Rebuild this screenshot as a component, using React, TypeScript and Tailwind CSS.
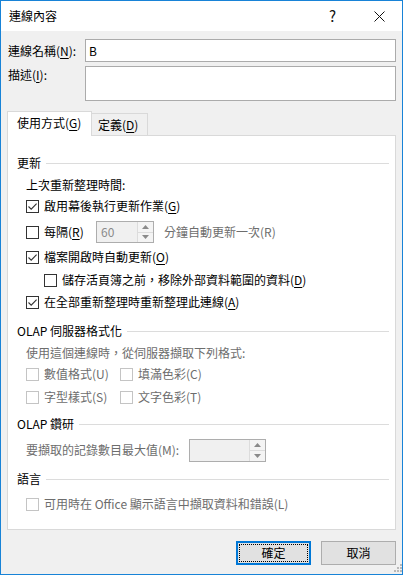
import React from "react";

function Cb({ checked = false, disabled = false }: { checked?: boolean; disabled?: boolean }) {
  return (
    <span
      className={
        disabled
          ? "w-[13px] h-[13px] border border-[#c4c4c4] bg-white flex items-center justify-center shrink-0"
          : "w-[13px] h-[13px] border border-[#333333] bg-white flex items-center justify-center shrink-0"
      }
    >
      {checked && (
        <svg width="11" height="11" viewBox="0 0 11 11">
          <path d="M1.5 5.5 L4.2 8.2 L9.6 2.6" stroke="#333333" strokeWidth="1.1" fill="none" />
        </svg>
      )}
    </span>
  );
}

function U({ c }: { c: string }) {
  return <span className="underline underline-offset-2">{c}</span>;
}

function Section({ title }: { title: string }) {
  return (
    <div className="h-[20px] flex items-center">
      <span className="whitespace-nowrap">{title}</span>
      <div className="flex-1 h-px bg-[#dcdcdc] ml-[5px]" />
    </div>
  );
}

function Arrow({ up }: { up: boolean }) {
  return (
    <svg width="7" height="4" viewBox="0 0 7 4">
      {up ? <path d="M0 4 L3.5 0 L7 4 Z" fill="#8a8a8a" /> : <path d="M0 0 L3.5 4 L7 0 Z" fill="#8a8a8a" />}
    </svg>
  );
}

function SpinButtons() {
  return (
    <div className="w-[16px] flex flex-col border-l border-[#dcdcdc] bg-[#f4f4f4]">
      <div className="flex-1 flex items-center justify-center border-b border-[#dcdcdc]">
        <Arrow up />
      </div>
      <div className="flex-1 flex items-center justify-center">
        <Arrow up={false} />
      </div>
    </div>
  );
}

export default function App() {
  return (
    <div className="w-[403px] h-[575px] border border-[#1883d7] bg-[#f0f0f0] flex flex-col font-['Noto_Sans_CJK_TC',sans-serif] text-[12px] leading-[16px] text-black overflow-hidden">
      {/* Title bar */}
      <div className="h-[30px] bg-white flex items-center pl-[8px] shrink-0">
        <span className="flex-1">連線內容</span>
        <span className="text-[15px] mr-[38px] text-[#111]">?</span>
        <svg width="11" height="11" viewBox="0 0 11 11" className="mr-[17px]">
          <path d="M0.5 0.5 L10.5 10.5 M10.5 0.5 L0.5 10.5" stroke="#111" strokeWidth="1" />
        </svg>
      </div>

      {/* Body */}
      <div className="flex-1 flex flex-col pt-[8px]">
        <div className="flex items-center pl-[7px] pr-[6px]">
          <span className="w-[77px]">
            連線名稱(<U c="N" />):
          </span>
          <div className="flex-1 h-[23px] bg-white border border-[#ababab] flex items-center pl-[3px]">B</div>
        </div>
        <div className="flex items-start pl-[7px] pr-[6px] mt-[4px]">
          <span className="w-[77px] pt-[1px]">
            描述(<U c="I" />):
          </span>
          <div className="flex-1 h-[35px] bg-white border border-[#ababab]" />
        </div>

        {/* Tabs */}
        <div className="flex items-end pl-[6px] mt-[10px] h-[24px]">
          <div className="h-[25px] -mb-px relative z-10 bg-white border border-b-0 border-[#d9d9d9] w-[85px] flex items-center pl-[9px] pb-[2px]">
            使用方式(<U c="G" />)
          </div>
          <div className="h-[22px] border border-l-0 border-b-0 border-[#d9d9d9] bg-[#f0f0f0] w-[56px] flex items-center pl-[6px]">
            定義(<U c="D" />)
          </div>
        </div>
        <div className="mx-[6px] h-[395px] bg-white border border-[#d9d9d9] pl-[9px] pr-[6px] pt-[17px] flex flex-col shrink-0">
          <Section title="更新" />
          <div className="h-[20px] mt-[2px] flex items-center pl-[9px]">上次重新整理時間:</div>
          <div className="h-[20px] mt-[1px] flex items-center pl-[9px] gap-[5px]">
            <Cb checked />
            <span>
              啟用幕後執行更新作業(<U c="G" />)
            </span>
          </div>
          <div className="h-[20px] mt-[6px] flex items-center pl-[9px]">
            <Cb />
            <span className="ml-[5px] w-[52px]">
              每隔(<U c="R" />)
            </span>
            <div className="w-[58px] h-[22px] border border-[#adadad] flex shrink-0">
              <div className="flex-1 bg-[#f0f0f0] text-[#8a8a8a] pl-[4px] flex items-center">60</div>
              <SpinButtons />
            </div>
            <span className="ml-[10px] text-[#6d6d6d]">分鐘自動更新一次(R)</span>
          </div>
          <div className="h-[20px] mt-[5px] flex items-center pl-[9px] gap-[5px]">
            <Cb checked />
            <span>
              檔案開啟時自動更新(<U c="O" />)
            </span>
          </div>
          <div className="h-[20px] mt-[3px] flex items-center pl-[27px] gap-[5px]">
            <Cb />
            <span>
              儲存活頁簿之前，移除外部資料範圍的資料(<U c="D" />)
            </span>
          </div>
          <div className="h-[20px] mt-[2px] flex items-center pl-[9px] gap-[5px]">
            <Cb checked />
            <span>
              在全部重新整理時重新整理此連線(<U c="A" />)
            </span>
          </div>

          <div className="mt-[9px]">
            <Section title="OLAP 伺服器格式化" />
          </div>
          <div className="h-[20px] mt-[2px] flex items-center pl-[9px] text-[#6d6d6d]">使用這個連線時，從伺服器擷取下列格式:</div>
          <div className="h-[20px] mt-[1px] flex items-center pl-[9px] text-[#6d6d6d]">
            <div className="w-[94px] flex items-center gap-[5px]">
              <Cb disabled />
              <span>數值格式(U)</span>
            </div>
            <div className="flex items-center gap-[5px]">
              <Cb disabled />
              <span>填滿色彩(C)</span>
            </div>
          </div>
          <div className="h-[20px] mt-[3px] flex items-center pl-[9px] text-[#6d6d6d]">
            <div className="w-[94px] flex items-center gap-[5px]">
              <Cb disabled />
              <span>字型樣式(S)</span>
            </div>
            <div className="flex items-center gap-[5px]">
              <Cb disabled />
              <span>文字色彩(T)</span>
            </div>
          </div>

          <div className="mt-[7px]">
            <Section title="OLAP 鑽研" />
          </div>
          <div className="h-[20px] mt-[6px] flex items-center pl-[9px] text-[#6d6d6d]">
            <span className="w-[163px]">要擷取的記錄數目最大值(M):</span>
            <div className="w-[77px] h-[23px] border border-[#adadad] flex shrink-0">
              <div className="flex-1 bg-[#f0f0f0]" />
              <SpinButtons />
            </div>
          </div>

          <div className="mt-[9px]">
            <Section title="語言" />
          </div>
          <div className="h-[20px] mt-[5px] flex items-center pl-[9px] gap-[5px] text-[#6d6d6d]">
            <Cb disabled />
            <span>可用時在 Office 顯示語言中擷取資料和錯誤(L)</span>
          </div>
        </div>

        {/* Buttons */}
        <div className="flex justify-end gap-[10px] pr-[6px] mt-[11px] relative flex-1">
          <button className="w-[75px] h-[24px] border-2 border-[#0078d7] bg-[#e1e1e1] p-px">
            <div className="w-full h-full border border-dotted border-[#000] flex items-center justify-center">確定</div>
          </button>
          <button className="w-[75px] h-[24px] border border-[#adadad] bg-[#e1e1e1] flex items-center justify-center">取消</button>
          <svg width="11" height="11" viewBox="0 0 11 11" className="absolute right-0 bottom-0">
            <g fill="#b8b8b8">
              <rect x="9" y="1" width="2" height="2" />
              <rect x="6" y="4" width="2" height="2" />
              <rect x="9" y="4" width="2" height="2" />
              <rect x="3" y="7" width="2" height="2" />
              <rect x="6" y="7" width="2" height="2" />
              <rect x="9" y="7" width="2" height="2" />
            </g>
          </svg>
        </div>
      </div>
    </div>
  );
}
